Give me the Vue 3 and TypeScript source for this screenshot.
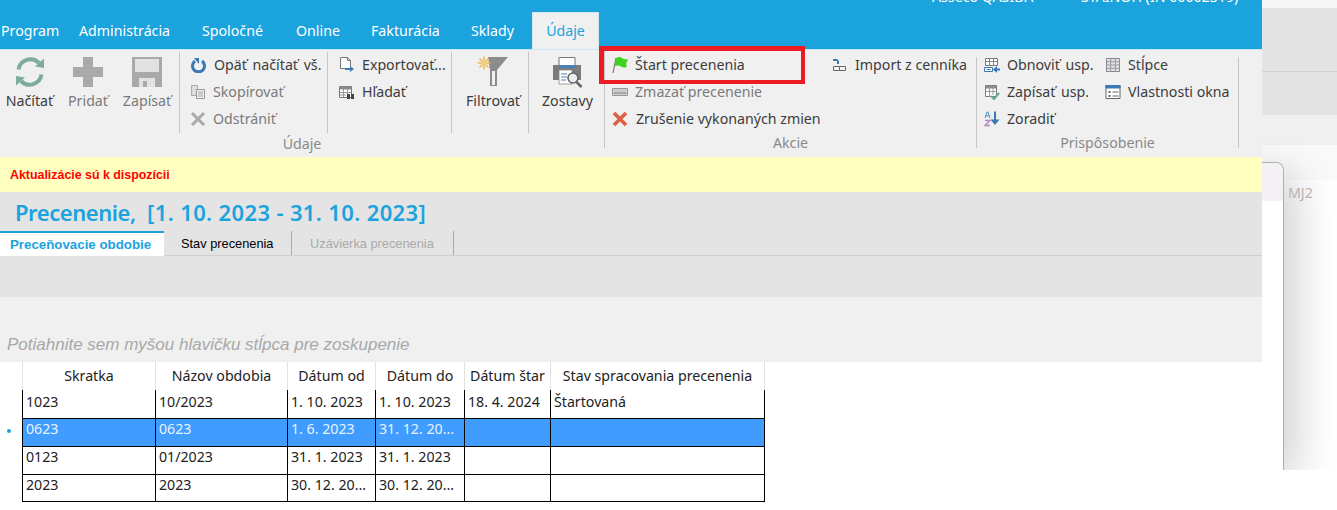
<script setup lang="ts">
interface Row { code: string; name: string; from: string; to: string; started: string; state: string; selected?: boolean }
const tabs: { label: string; width: number }[] = [
  { label: 'Program', width: 78 },
  { label: 'Administrácia', width: 123 },
  { label: 'Spoločné', width: 94 },
  { label: 'Online', width: 75 },
  { label: 'Fakturácia', width: 100 },
  { label: 'Sklady', width: 61 }
]
const columns = ['Skratka', 'Názov obdobia', 'Dátum od', 'Dátum do', 'Dátum štar', 'Stav spracovania precenenia']
const rows: Row[] = [
  { code: '1023', name: '10/2023', from: '1. 10. 2023', to: '1. 10. 2023', started: '18. 4. 2024', state: 'Štartovaná' },
  { code: '0623', name: '0623', from: '1. 6. 2023', to: '31. 12. 20...', started: '', state: '', selected: true },
  { code: '0123', name: '01/2023', from: '31. 1. 2023', to: '31. 1. 2023', started: '', state: '' },
  { code: '2023', name: '2023', from: '30. 12. 20...', to: '30. 12. 20...', started: '', state: '' }
]
</script>

<template>
  <div class="page">
    <div class="backdrop">
      <div class="band b0"></div>
      <div class="band b1"></div>
      <div class="band b2"></div>
      <div class="band b3"></div>
      <div class="band b4"></div>
      <div class="band b5"></div>
    </div>
    <div class="rear-window"><div class="rear-head"></div></div>
    <span class="mj">MJ2</span>

    <div class="front">
      <header class="topbar">
        <div class="userline"><span class="u1">Asseco QASIDA</span><span class="u2">STAINOH (IN 00002319)</span></div>
        <nav class="tabs">
          <span v-for="t in tabs" :key="t.label" class="tab" :style="{ width: t.width + 'px' }">{{ t.label }}</span>
          <span class="tab active">Údaje</span>
        </nav>
      </header>

      <section class="ribbon">
        <div class="group g-data">
          <div class="group-body">
            <div class="big w-a">
              <svg width="32" height="32" viewBox="0 0 32 32"><path d="M4.500 13.500A12 12 0 0 1 25 7" fill="none" stroke="#7cac9c" stroke-width="4"/><path d="M21 10.500 30 12 30 2.500z" fill="#7cac9c"/><path d="M27.500 18.500A12 12 0 0 1 7 25" fill="none" stroke="#7cac9c" stroke-width="4"/><path d="M11 21.500 2 20 2 29.500z" fill="#7cac9c"/></svg>
              <span class="dark">Načítať</span>
            </div>
            <div class="big w-b">
              <svg width="32" height="32" viewBox="0 0 32 32"><path d="M11 1h10v10h10v10H21v10H11V21H1V11h10z" fill="#aaa"/></svg>
              <span class="dim">Pridať</span>
            </div>
            <div class="big w-c">
              <svg width="32" height="32" viewBox="0 0 32 32"><path d="M1 1h30v30H1z" fill="#a9a9a9"/><path d="M4 3h24v13H4z" fill="#e2e2e2"/><path d="M8 22h16v9H8z" fill="#e2e2e2"/><path d="M12 25h4v6h-4z" fill="#a9a9a9"/></svg>
              <span class="dim">Zapísať</span>
            </div>
            <i class="sep s1"></i>
            <div class="col c1">
              <div class="item">
                <svg width="16" height="16" viewBox="0 0 16 16"><path d="M5 4A6 6 0 1 0 12 4" fill="none" stroke="#3b78b4" stroke-width="3"/><path d="M4 1h5v6z" fill="#3b78b4"/></svg>
                <span class="dark nudge wide">Opäť načítať vš.</span>
              </div>
              <div class="item">
                <svg width="16" height="16" viewBox="0 0 16 16"><path d="M1.500 1.500h6v10h-6z" fill="#ddd" stroke="#aaa"/><path d="M6.500 5.500h8v9h-8z" fill="#eee" stroke="#999"/><path d="M8 8h5M8 10h5M8 12h5" stroke="#aaa"/></svg>
                <span class="dim">Skopírovať</span>
              </div>
              <div class="item">
                <svg width="16" height="16" viewBox="0 0 16 16"><path d="M2 2l12 12M14 2 2 14" stroke="#a9a9a9" stroke-width="3"/></svg>
                <span class="dim">Odstrániť</span>
              </div>
            </div>
            <i class="sep s2"></i>
            <div class="col c2">
              <div class="item">
                <svg width="16" height="16" viewBox="0 0 16 16"><path d="M1.500 .5h7l3 3v8h-10z" fill="#fff" stroke="#777"/><path d="M8.500 .5v3h3" fill="none" stroke="#777"/><path d="M6 12h6" stroke="#3b78b4" stroke-width="2"/><path d="M11 9l4 3-4 3z" fill="#3b78b4"/></svg>
                <span class="dark">Exportovať...</span>
              </div>
              <div class="item">
                <svg width="16" height="16" viewBox="0 0 16 16"><path d="M.5 2.500h12v11H.5z" fill="#fff" stroke="#777"/><path d="M.5 2.500h12v3H.5z" fill="#8a8a8a"/><path d="M4.500 5v8M8.500 5v8M1 8.500h11M1 11h6" stroke="#999"/><path d="M8 10h3v5H8zM12 10h3v5h-3z" fill="#444"/></svg>
                <span class="dark">Hľadať</span>
              </div>
            </div>
            <i class="sep s3"></i>
            <div class="big w-d">
              <svg class="filter" width="34" height="32" viewBox="0 0 34 32"><path d="M11 1h20L20 14v16h-7V14z" fill="#8c8c8c"/><path d="M15 15h3v14h-3z" fill="#f0f0f0"/><g stroke="#eeb75c" stroke-width="1.500"><path d="M7 .5v13M.5 7h13M2.500 2.500l9 9M11.500 2.500l-9 9"/></g><circle cx="7" cy="7" r="3.500" fill="#f4cd85"/></svg>
              <span class="dark">Filtrovať</span>
            </div>
            <i class="sep s4"></i>
            <div class="big w-e">
              <svg width="32" height="32" viewBox="0 0 32 32"><path d="M7 1.500h16v8H7z" fill="#fff" stroke="#777"/><path d="M1 9h28v15H1z" fill="#7b7b7b"/><path d="M7 9h16v3H7z" fill="#4c7fb5"/><path d="M7 14h13v14H7z" fill="#fff" stroke="#888" stroke-width=".8"/><path d="M9 18h6M9 21h6M9 24h5" stroke="#4c7fb5"/><circle cx="21" cy="22" r="5" fill="#e8eef2" stroke="#666" stroke-width="1.600"/><path d="M24.500 26l5 5" stroke="#666" stroke-width="2.500"/></svg>
              <span class="dark">Zostavy</span>
            </div>
          </div>
          <div class="group-label">Údaje</div>
        </div>

        <div class="group g-act">
          <div class="group-body">
            <div class="col c3">
              <div class="item">
                <svg width="16" height="18" viewBox="0 0 16 18"><path d="M1 17 4 2" stroke="#777" stroke-width="1.200"/><path d="M4 2q4-2 6 0t6 1l-2 5 1 3q-4 1-6-.5T2.500 10z" fill="#3fd21f"/></svg>
                <span class="dark">Štart precenenia</span>
              </div>
              <div class="item">
                <svg width="16" height="16" viewBox="0 0 16 16"><path d="M.5 4.500h15v7H.5z" fill="#ccc" stroke="#999"/><path d="M2 8h12v2H2z" fill="#a8a8a8"/></svg>
                <span class="dim">Zmazať precenenie</span>
              </div>
              <div class="item">
                <svg width="16" height="16" viewBox="0 0 16 16"><path d="M2 2l12 12M14 2 2 14" stroke="#dc6043" stroke-width="3.600"/></svg>
                <span class="dark nudge">Zrušenie vykonaných zmien</span>
              </div>
            </div>
            <div class="col c4">
              <div class="item">
                <svg width="16" height="16" viewBox="0 0 16 16"><path d="M2.500 9.500h6v4h-6zM8.500 9.500h6v4h-6z" fill="#f4f4f4" stroke="#666"/><path d="M2 2h4l2 2v3H6V4H2z" fill="#3b78b4"/></svg>
                <span class="dark nudge">Import z cenníka</span>
              </div>
            </div>
          </div>
          <div class="group-label">Akcie</div>
        </div>

        <div class="group g-cust">
          <div class="group-body">
            <div class="col c5">
              <div class="item">
                <svg width="16" height="16" viewBox="0 0 16 16"><path d="M1.500 1.500h12v7h-12z" fill="#fff" stroke="#777"/><path d="M1.500 4.500h12M5.500 2v7M9.500 2v7" stroke="#888"/><path d="M.5 10.500h8v4h-8z" fill="#fff" stroke="#3b78b4"/><path d="M2.500 12.500h4" stroke="#3b78b4"/><path d="M10 12.500h6" stroke="#3b78b4" stroke-width="2"/><path d="M13 9v7l-4-3.500z" fill="#3b78b4"/></svg>
                <span class="dark wide">Obnoviť usp.</span>
              </div>
              <div class="item">
                <svg width="16" height="16" viewBox="0 0 16 16"><path d="M1.500 1.500h11v11h-11z" fill="#fff" stroke="#777"/><path d="M1.500 1.500h11v3h-11z" fill="#8a8a8a"/><path d="M1.500 7.500h11M5.500 2v11M9 2v9" stroke="#999"/><path d="M7 12l3 3 5-6" fill="none" stroke="#6aa98c" stroke-width="2.200"/></svg>
                <span class="dark wide">Zapísať usp.</span>
              </div>
              <div class="item">
                <svg width="16" height="17" viewBox="0 0 16 17"><path d="M11 1.500v11" stroke="#3b78b4" stroke-width="2"/><path d="M6.500 9.500h9L11 15z" fill="#3b78b4"/><path d="M1 8l2-6h1l2 6M2 5.800h3" fill="none" stroke="#4c8fc7"/><path d="M1 10.500h5L1 15.500h5" fill="none" stroke="#b888c4" stroke-width="1.400"/></svg>
                <span class="dark">Zoradiť</span>
              </div>
            </div>
            <div class="col c6">
              <div class="item">
                <svg width="14" height="14" viewBox="0 0 14 14"><path d="M.5.500h13v13H.5z" fill="#e0e2e8" stroke="#8a8a8a"/><path d="M.5 3.700h13M.5 7h13M.5 10.300h13M4.700 1v13M9.300 1v13" stroke="#9a9a9a"/></svg>
                <span class="dark">Stĺpce</span>
              </div>
              <div class="item">
                <svg width="15" height="14" viewBox="0 0 15 14"><path d="M.5.500h14v13H.5z" fill="#fff" stroke="#666"/><path d="M0 0h15v3.500H0z" fill="#3b78b4"/><path d="M3 6h2v2H3zM3 10h2v2H3z" fill="#666"/><path d="M7 7h6M7 11h6" stroke="#666"/></svg>
                <span class="dark">Vlastnosti okna</span>
              </div>
            </div>
          </div>
          <div class="group-label">Prispôsobenie</div>
        </div>
        <div class="highlight"></div>
      </section>

      <div class="notice">Aktualizácie sú k dispozícii</div>

      <section class="title-area">
        <h1><span class="t-name">Precenenie,</span>&nbsp; <span class="t-range">[1. 10. 2023 - 31. 10. 2023]</span></h1>
        <div class="subtabs">
          <span class="st first">Preceňovacie obdobie</span>
          <span class="st second">Stav precenenia</span>
          <span class="st third">Uzávierka precenenia</span>
        </div>
        <div class="toolstrip"></div>
      </section>

      <div class="grouphint">Potiahnite sem myšou hlavičku stĺpca pre zoskupenie</div>
    </div>

    <div class="gridwrap">
      <div class="marker"><i></i></div>
      <table class="grid">
        <colgroup>
          <col style="width:133px" /><col style="width:132px" /><col style="width:88px" />
          <col style="width:89px" /><col style="width:86px" /><col style="width:214px" />
        </colgroup>
        <thead>
          <tr><th v-for="c in columns" :key="c">{{ c }}</th></tr>
        </thead>
        <tbody>
          <tr v-for="r in rows" :key="r.code" :class="{ sel: r.selected }">
            <td>{{ r.code }}</td><td>{{ r.name }}</td><td>{{ r.from }}</td>
            <td>{{ r.to }}</td><td>{{ r.started }}</td><td>{{ r.state }}</td>
          </tr>
        </tbody>
      </table>
    </div>
  </div>
</template>

<style>
html, body { margin: 0; background: #fff; }
</style>

<style scoped>
.page {
  position: relative;
  width: 1337px;
  height: 510px;
  overflow: hidden;
  background: #fff;
  font-family: "Noto Sans", "Open Sans", sans-serif;
  font-size: 14.2px;
}
/* windows behind the front window */
.backdrop { position: absolute; top: 0; left: 1262px; right: 0; }
.band { width: 100%; }
.b0 { height: 8px; background: #f6f6f6; }
.b1 { height: 63px; background: #e4e4e4; border-bottom: 1px solid #d2d2d2; }
.b2 { height: 43px; background: #e4e4e4; }
.b3 { height: 30px; background: #f0f0f0; }
.b4 { height: 35px; background: #fafafa; }
.b5 { height: 20px; background: #fff; }
.mj { position: absolute; left: 1288px; top: 184px; color: #b4b4b4; line-height: 18px; }
.rear-window {
  position: absolute;
  left: 1200px;
  top: 162px;
  width: 83px;
  height: 307px;
  background: #fff;
  border: solid #b0b0b0;
  border-width: 1px 1px 0 0;
  border-top-right-radius: 8px;
  box-shadow: 15px 10px 40px rgba(0, 0, 0, .17);
  clip-path: inset(-40px -60px 0 0);
}
.rear-head { height: 38px; background: #f4f1f4; border-top-right-radius: 8px; }

.front { position: relative; width: 1262px; }
.topbar { height: 49px; background: #1ba3de; overflow: hidden; }
.userline { height: 0; position: relative; color: #fff; font-size: 14.2px; line-height: 14px; }
.u1 { position: absolute; left: 932px; top: -10px; white-space: nowrap; }
.u2 { position: absolute; left: 1081px; top: -10px; white-space: nowrap; }
.tabs { display: flex; height: 37px; margin-top: 12px; padding-left: 1px; color: #fff; font-size: 14.2px; }
.tab { display: block; line-height: 37px; white-space: nowrap; }
.tab.active {
  width: 67px;
  box-sizing: border-box;
  text-align: center;
  background: #f0f0f0;
  color: #1ba3de;
  border: 1px solid #d6e6ee;
  border-bottom: 0;
  line-height: 36px;
}
.ribbon {
  position: relative;
  display: flex;
  height: 107px;
  border-top: 1px solid #c9e6f4;
  box-sizing: content-box;
  background: #f0f0f0;
  color: #333;
}
.group { position: relative; display: flex; flex-direction: column; box-sizing: border-box; }
.g-data { width: 604px; }
.g-act { width: 372px; border-left: 1px solid #c6c6c6; margin-bottom: 9px; }
.g-cust { width: 263px; border-left: 1px solid #c6c6c6; border-right: 1px solid #c6c6c6; margin-top: 7px; margin-bottom: 9px; }
.group-body { display: flex; height: 83px; padding-top: 1px; }
.g-cust .group-body { margin-top: -7px; }
.group-label { height: 24px; line-height: 21px; text-align: center; color: #8a8a8a; font-size: 14.2px; }
.big { display: flex; flex-direction: column; align-items: center; flex: none; padding-top: 5px; white-space: nowrap; }
.big svg { display: block; height: 32px; }
.big span { margin-top: 4px; line-height: 18px; }
.w-a { width: 59px; }
.w-b { width: 58px; }
.w-c { width: 60px; }
.w-d { width: 76px; padding-left: 6px; box-sizing: border-box; }
.w-e { width: 75px; padding-left: 2px; box-sizing: border-box; }
.filter { margin-left: 2px; }
.sep { display: block; flex: none; width: 1px; height: 81px; margin-top: 1px; background: #c6c6c6; }
.s1 { margin-left: 2px; }
.col { display: flex; flex-direction: column; flex: none; box-sizing: border-box; }
.c1 { width: 147px; padding-left: 10px; }
.c2 { width: 123px; padding-left: 11px; }
.c3 { width: 226px; padding-left: 7px; }
.c5 { width: 128px; padding-left: 7px; }
.item { display: flex; align-items: center; height: 27px; gap: 7px; white-space: nowrap; }
.item svg { flex: none; width: 16px; }
.nudge { margin-left: 1px; }
.wide { word-spacing: 2px; }
.dark { color: #3c3c3c; }
.dim { color: #7a7a7a; }
.highlight {
  position: absolute;
  left: 599px;
  top: -4px;
  width: 206px;
  height: 38px;
  box-sizing: border-box;
  border: solid #ed1c24;
  border-width: 5px 4px 4px 5px;
  pointer-events: none;
}
.notice {
  height: 35px;
  padding-left: 10px;
  background: #ffffc0;
  color: #f00;
  font: bold 12.4px/36px "Liberation Sans", sans-serif;
}
.title-area { background: #e4e4e4; height: 105px; box-sizing: border-box; }
h1 {
  margin: 0;
  height: 39px;
  padding: 0 0 0 15px;
  line-height: 41px;
  font-size: 22px;
  font-weight: 600;
  color: #1ba3de;
  white-space: pre;
}
.t-name { letter-spacing: -.45px; }
.t-range { letter-spacing: .36px; }
.subtabs {
  display: flex;
  height: 25px;
  border-bottom: 1px solid #cfcfcf;
  font: 12.8px/26px "Liberation Sans", sans-serif;
  box-sizing: border-box;
}
.st { display: block; box-sizing: border-box; height: 24px; white-space: nowrap; }
.first { width: 164px; padding-left: 10px; background: #fff; border-top: 2px solid #1ba3de; color: #1ba3de; font-weight: 700; font-size: 13.3px; line-height: 24px; height: 25px; }
.second { width: 128px; padding-left: 17px; color: #000; border-right: 1px solid #aaa; }
.third { width: 162px; padding-left: 18px; color: #aaa; border-right: 1px solid #aaa; }
.toolstrip { height: 41px; }
.grouphint {
  height: 65px;
  box-sizing: border-box;
  padding: 38px 0 0 7px;
  background: #f0f0f0;
  color: #a8a8a8;
  font: italic 17px/20px "Liberation Sans", sans-serif;
}
.gridwrap { display: flex; align-items: flex-start; }
.marker { width: 22px; flex: none; height: 84px; position: relative; }
.marker i { position: absolute; left: 7px; top: 67px; width: 4px; height: 4px; border-radius: 50%; background: #1ba3de; }
.grid {
  table-layout: fixed;
  width: 743px;
  border-collapse: collapse;
  font-size: 14.2px;
  line-height: 18px;
  color: #222;
}
.grid th {
  height: 28px;
  padding: 0;
  font-weight: 400;
  text-align: center;
  background: #fff;
  border-left: 1px solid #e2e2e2;
  border-right: 1px solid #e2e2e2;
  white-space: nowrap;
  overflow: hidden;
}
.grid td {
  height: 28px;
  padding: 0 0 7px 3px;
  border: 1px solid #000;
  box-sizing: border-box;
  white-space: nowrap;
  overflow: hidden;
}
.grid tbody tr:first-child td { border-top: 0; padding-bottom: 4px; }
.grid tbody tr:last-child td { height: 27px; padding-bottom: 6px; }
.grid tbody tr.sel td { background: #409cff; color: #e8f2ff; border-top: 1px dotted #000; }
</style>
